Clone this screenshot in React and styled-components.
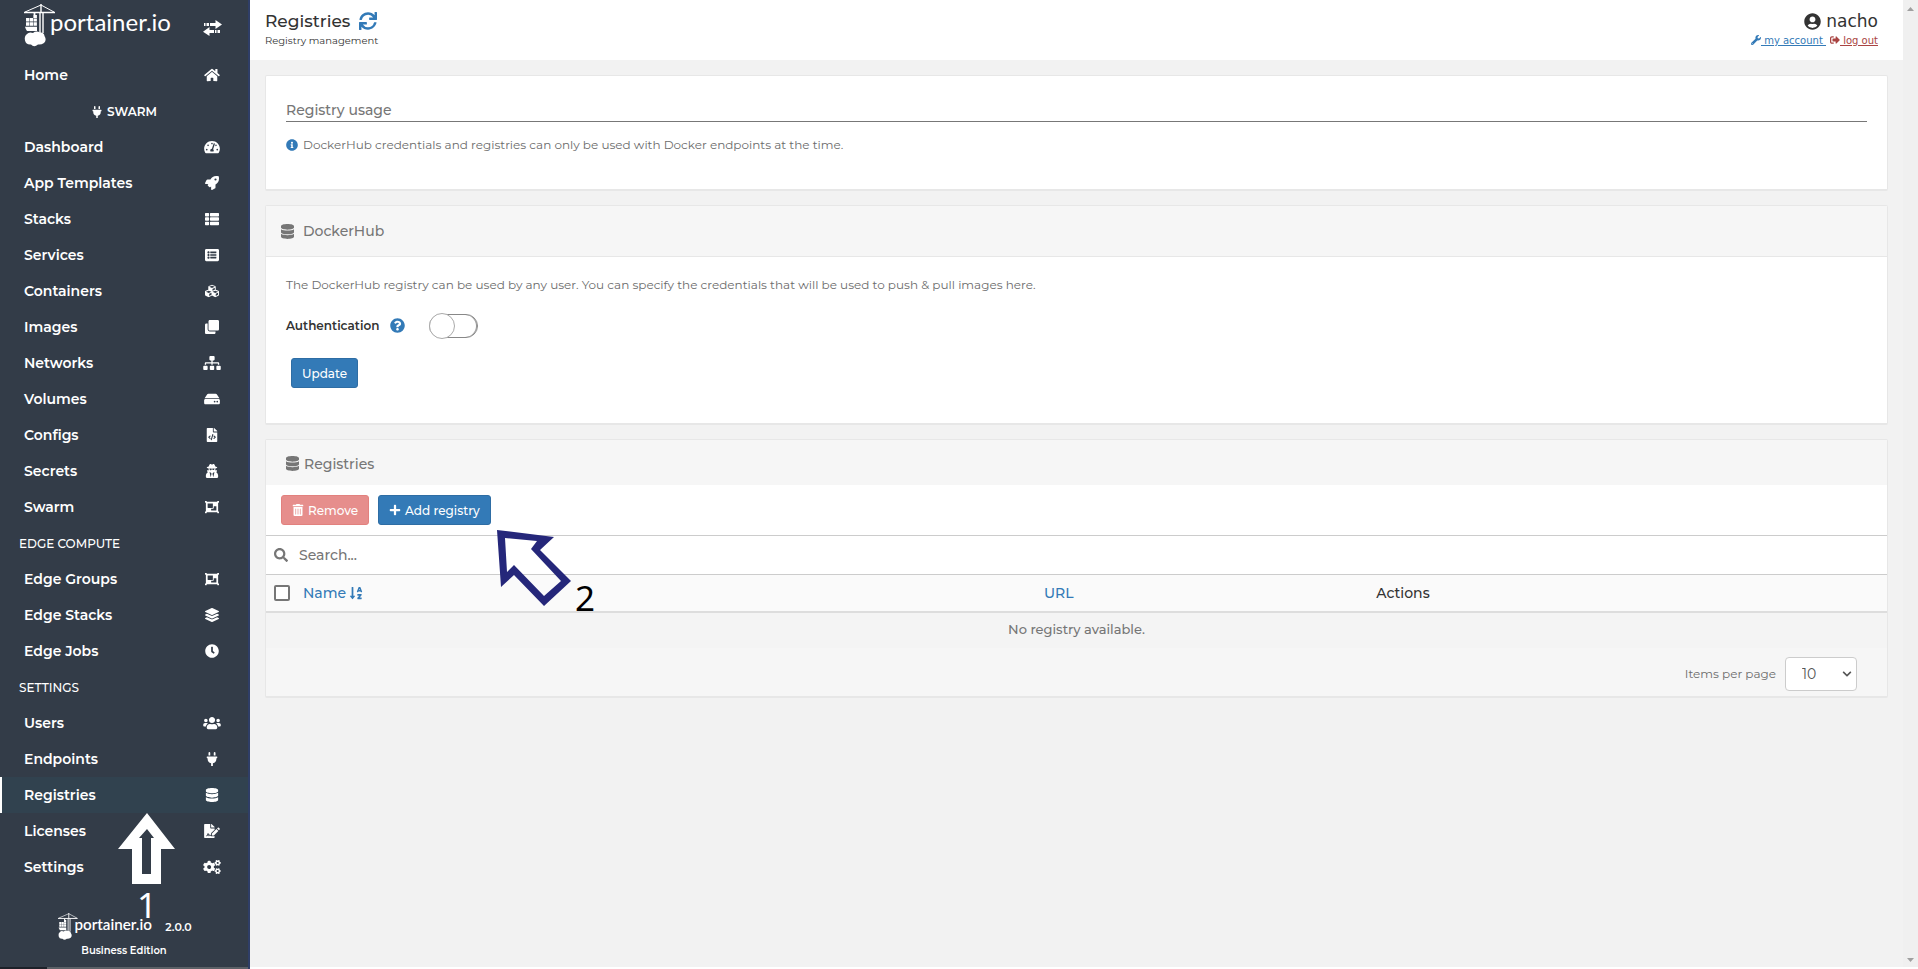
import React from "react";
import styled, { createGlobalStyle, css } from "styled-components";
import {
  FaHome, FaPlug, FaTachometerAlt, FaRocket, FaThList, FaListAlt, FaCubes, FaClone,
  FaSitemap, FaHdd, FaFileCode, FaUserSecret, FaObjectGroup, FaLayerGroup, FaClock,
  FaUsers, FaDatabase, FaFileSignature, FaCogs, FaSync, FaUserCircle, FaWrench,
  FaSignOutAlt, FaInfoCircle, FaQuestionCircle, FaTrashAlt, FaPlus, FaSearch,
  FaSortAlphaDown, FaChevronDown,
} from "react-icons/fa";

const GlobalStyle = createGlobalStyle`
  *, *::before, *::after { box-sizing: border-box; }
  body {
    margin: 0;
    background: #f2f2f2;
    color: #333;
    font-family: Montserrat, Inter, "Liberation Sans", sans-serif;
    font-size: 12px;
    line-height: 20px;
  }
  button, input, select { font-family: inherit; }
`;

const Shell = styled.div`
  display: grid;
  grid-template-columns: 250px minmax(0, 1fr) 15px;
  min-height: 100vh;
`;

/* ---------- sidebar ---------- */

const Sidebar = styled.nav`
  display: flex;
  flex-direction: column;
  background: #333c48;
  border-right: 2px solid #2f3e67;
  color: #fff;
`;

const SidebarTop = styled.div`
  display: flex;
  align-items: flex-start;
  justify-content: space-between;
  height: 57px;
  padding: 4px 26px 0 24px;
`;

const CollapseButton = styled.button`
  display: flex;
  margin-top: 16px;
  padding: 0;
  border: 0;
  background: none;
  color: #fff;
  cursor: pointer;
`;

const Menu = styled.ul`
  margin: 0;
  padding: 0;
  list-style: none;
`;

const MenuRow = styled.li`
  position: relative;
`;

const MenuLink = styled.a`
  display: flex;
  align-items: center;
  justify-content: space-between;
  height: 36px;
  padding: 0 27px 0 24px;
  color: #fff;
  font-size: 14px;
  font-weight: 600;
  text-decoration: none;
  ${(p) => p.$active && css`
    background: #31424f;
    box-shadow: inset 2px 0 0 #fff;
  `}
`;

const MenuIcon = styled.span`
  display: flex;
  svg { width: 18px; height: 14px; }
`;

const MenuHeading = styled.li`
  display: flex;
  align-items: center;
  gap: 4px;
  height: 36px;
  padding: 2px 19px 0;
  font-size: 12px;
  font-weight: ${(p) => (p.$center ? 600 : 500)};
  justify-content: ${(p) => (p.$center ? "center" : "flex-start")};
`;

const SidebarFooter = styled.footer`
  display: flex;
  flex-direction: column;
  align-items: center;
  margin-top: auto;
  font-size: 10px;
  font-weight: 600;
`;

const Version = styled.div`
  display: flex;
  align-items: center;
  gap: 12px;
  padding-left: 2px;
  font-size: 11px;
`;

const StatusStrip = styled.div`
  width: 100%;
  height: 2px;
  margin-top: 6px;
  background: linear-gradient(to right, #1d2129 47px, #5c6167 47px);
`;

/* ---------- main ---------- */

const Main = styled.main`
  min-width: 0;
  border-bottom: 2px solid #fff;
`;

const PageHeader = styled.header`
  display: flex;
  justify-content: space-between;
  height: 60px;
  padding: 10px 25px 0 15px;
  background: #fff;
`;

const Title = styled.h1`
  display: flex;
  align-items: center;
  gap: 9px;
  margin: 0;
  font-size: 17px;
  font-weight: 500;
  line-height: 22px;
`;

const IconButton = styled.button`
  display: flex;
  padding: 0;
  border: 0;
  background: none;
  color: #337ab7;
  font-size: 18px;
  cursor: pointer;
`;

const Subtitle = styled.div`
  font-size: 10px;
  line-height: 18px;
`;

const UserBox = styled.div`
  display: flex;
  flex-direction: column;
  align-items: flex-end;
  font-family: "DejaVu Sans", sans-serif;
`;

const UserName = styled.div`
  display: flex;
  align-items: center;
  gap: 5px;
  font-size: 17px;
  line-height: 22px;
`;

const UserLinks = styled.div`
  display: flex;
  gap: 4px;
  font-size: 10px;
  line-height: 18px;
`;

const UserLink = styled.a`
  color: ${(p) => (p.$danger ? "#a94442" : "#337ab7")};
  white-space: pre;
  svg { vertical-align: -1px; }
`;

const Content = styled.div`
  display: flex;
  flex-direction: column;
  gap: 14px;
  padding: 15px;
`;

const Card = styled.section`
  border: 1px solid #e7e7e7;
  border-bottom-width: 2px;
  border-radius: 2px;
  background: ${(p) => (p.$muted ? "#f6f6f6" : "#fff")};
`;

const CardHeader = styled.h2`
  display: flex;
  align-items: center;
  gap: ${(p) => (p.$table ? 5 : 9)}px;
  height: ${(p) => (p.$table ? 45 : 51)}px;
  margin: 0;
  padding: ${(p) => (p.$table ? "2px 20px 0" : "0 15px")};
  border-bottom: ${(p) => (p.$table ? 0 : "1px solid #e7e7e7")};
  background: #f6f6f6;
  color: #767676;
  font-size: 14px;
  font-weight: 500;
  svg { width: 13px; height: 15px; }
`;

const CardBody = styled.div`
  padding: ${(p) => (p.$short ? "20px 20px 34px" : "18px 20px 35px")};
  color: #6c6c6c;
`;

const FormTitle = styled.h3`
  margin: 0 0 13px;
  padding-top: 4px;
  border-bottom: 1px solid #777;
  color: #767676;
  font-size: 14px;
  font-weight: 500;
  line-height: 21px;
`;

const Note = styled.p`
  display: flex;
  align-items: center;
  gap: 5px;
  margin: 0;
  svg { color: #337ab7; }
`;

const AuthRow = styled.label`
  display: flex;
  align-items: center;
  height: 26px;
  margin: 18px 0 19px;
  color: #333;
  font-weight: 600;
  cursor: pointer;
`;

const HelpIcon = styled(FaQuestionCircle)`
  margin: 0 24px 2px 11px;
  color: #337ab7;
  font-size: 15px;
`;

const Switch = styled.input`
  appearance: none;
  display: flex;
  align-items: center;
  width: 49px;
  height: 24px;
  margin: 0;
  border: 1px solid #888;
  border-radius: 12px;
  background: #fff;
  box-shadow: inset -1px 0 0 #999;
  cursor: pointer;
  &::before {
    content: "";
    width: 26px;
    height: 26px;
    margin-left: -1px;
    flex: none;
    border: 1px solid #aaa;
    border-radius: 50%;
    background: #fff;
  }
  &:checked { justify-content: flex-end; background: #337ab7; }
`;

const Button = styled.button`
  display: inline-flex;
  align-items: center;
  justify-content: center;
  gap: 4px;
  height: 30px;
  padding: 0 10px;
  border: 1px solid ${(p) => (p.$danger ? "#d43f3a" : "#2e6da4")};
  border-radius: 3px;
  background: ${(p) => (p.$danger ? "#d9534f" : "#337ab7")};
  color: #fff;
  font-size: 12px;
  font-weight: 500;
  cursor: pointer;
  &:disabled { opacity: 0.65; cursor: not-allowed; }
`;

const FormActions = styled.div`
  padding: 0 5px;
`;

const ActionBar = styled.div`
  position: relative;
  display: flex;
  gap: 9px;
  padding: 10px 15px;
  background: #fff;
`;

const SearchBar = styled.label`
  display: flex;
  align-items: center;
  gap: 11px;
  height: 39px;
  padding: 0 8px;
  border-top: 1px solid #ccc;
  background: #fff;
  color: #767676;
  font-size: 14px;
`;

const SearchInput = styled.input`
  flex: 1;
  padding: 0;
  border: 0;
  outline: 0;
  background: none;
  color: #767676;
  font-size: 14px;
  font-weight: 500;
  &::placeholder { color: #767676; opacity: 1; }
`;

const Table = styled.table`
  width: 100%;
  border-collapse: separate;
  border-spacing: 0;
  table-layout: fixed;
`;

const HeadCell = styled.th`
  width: ${(p) => p.$width};
  height: 39px;
  padding: 0 8px 1px;
  border-top: 1px solid #ccc;
  border-bottom: 2px solid #ddd;
  background: #fafafa;
  color: #333;
  font-size: 14px;
  font-weight: 500;
  text-align: left;
  > div { display: flex; align-items: center; gap: 13px; }
`;

const SortLink = styled.a`
  display: inline-flex;
  align-items: center;
  gap: 3px;
  color: #337ab7;
  text-decoration: none;
`;

const Checkbox = styled.input`
  appearance: none;
  width: 16px;
  height: 16px;
  margin: 0;
  border: 2px solid #767676;
  border-radius: 2px;
  background: #fff;
  &:checked { background: #337ab7; }
`;

const EmptyCell = styled.td`
  height: 35px;
  padding: 0 8px 4px;
  background: #f4f4f4;
  color: #767676;
  font-size: 13px;
  font-weight: 500;
  text-align: center;
`;

const TableFooter = styled.div`
  display: flex;
  align-items: center;
  justify-content: flex-end;
  height: 48px;
  padding: 4px 30px 0 0;
`;

const PageSizeLabel = styled.label`
  display: flex;
  align-items: center;
  gap: 9px;
  color: #6c6c6c;
`;

const SelectWrap = styled.span`
  display: grid;
  align-items: center;
  width: 72px;
  height: 34px;
  color: #555;
  > * { grid-area: 1 / 1; }
  > svg { justify-self: end; margin-right: 5px; font-size: 10px; pointer-events: none; }
`;

const Select = styled.select`
  appearance: none;
  width: 100%;
  height: 100%;
  padding: 0 16px;
  border: 1px solid #ccc;
  border-radius: 4px;
  background: #fff;
  color: #555;
  font-size: 14px;
`;

const ScrollTrack = styled.div`
  position: sticky;
  top: 0;
  display: flex;
  flex-direction: column;
  align-items: center;
  justify-content: space-between;
  height: 100vh;
  padding: 7px 0 5px;
  border-bottom: 2px solid #fff;
  background: #f0f0f0;
`;

/* ---------- annotations ---------- */

const StepOne = styled.div`
  position: absolute;
  top: 36px;
  left: 118px;
  z-index: 2;
  display: flex;
  flex-direction: column;
  align-items: center;
  gap: 13px;
  color: #fff;
  pointer-events: none;
`;

const StepTwo = styled.div`
  position: absolute;
  top: 45px;
  left: 231px;
  z-index: 2;
  display: flex;
  align-items: flex-end;
  gap: 4px;
  color: #000;
  pointer-events: none;
`;

const StepNumber = styled.span`
  font-family: "Noto Sans", sans-serif;
  font-size: 35px;
  font-weight: 400;
  line-height: 16px;
`;

/* ---------- drawings ---------- */

function Logo({ width, height }) {
  return (
    <svg width={width} height={height} viewBox="0 0 150 44" fill="#fff" role="img" aria-label="portainer.io">
      <g stroke="#fff" fill="none" strokeWidth="1">
        <path d="M0 8.5H31" strokeWidth="1.5" />
        <path d="M1 8L17 1L30 8" />
        <path d="M17 0V9" strokeWidth="1.4" />
        <path d="M16 9V29M19 9V29" strokeWidth="1.4" />
        <path d="M10.500 9V14" strokeWidth="1.8" />
      </g>
      <path d="M2 14h3.300v3.600H2zM5.800 14h3.300v3.600H5.800zM9.600 11h3.300v3H9.600zM9.600 14.500h3.300v3.100H9.600zM2 18.200h3.300v3.600H2zM5.800 18.200h3.300v3.600H5.800zM9.600 18.200h3.300v3.600H9.600z" />
      <path d="M1 22.800H13V27H3Q1.500 25 1 22.800Z" />
      <path d="M3 30Q5 27.500 9 29Q12 26.500 16 28.500Q20 28 20.500 32Q23 36 20 39Q17 41 14 40.500Q10 44 7 40.500Q2 41 1 36.500Q0 32 3 30Z" />
      <text x="26" y="27" fontFamily="Lato, sans-serif" fontSize="24">portainer.io</text>
    </svg>
  );
}

function TransferIcon() {
  return (
    <svg width="19" height="16" viewBox="0 0 19 16" fill="currentColor">
      <path d="M12.500 0L19 4.500L12.500 9V6H7V3H12.500ZM1 3H2.500V6H1ZM3.500 3H6V6H3.500ZM6.500 7L0 11.700L6.500 16V13H11V10H6.500ZM12 10H13.500V13H12ZM14.500 10H17V13H14.500Z" />
    </svg>
  );
}

const ScrollArrow = ({ down }) => (
  <svg width="7" height="4" viewBox="0 0 7 4" fill="#a0a0a0">
    <path d={down ? "M0 0H7L3.500 4Z" : "M0 4H7L3.500 0Z"} />
  </svg>
);

/* ---------- page ---------- */

const endpointMenu = [
  ["Dashboard", FaTachometerAlt], ["App Templates", FaRocket], ["Stacks", FaThList],
  ["Services", FaListAlt], ["Containers", FaCubes], ["Images", FaClone],
  ["Networks", FaSitemap], ["Volumes", FaHdd], ["Configs", FaFileCode],
  ["Secrets", FaUserSecret], ["Swarm", FaObjectGroup],
];
const edgeMenu = [["Edge Groups", FaObjectGroup], ["Edge Stacks", FaLayerGroup], ["Edge Jobs", FaClock]];
const settingsMenu = [
  ["Users", FaUsers], ["Endpoints", FaPlug], ["Registries", FaDatabase],
  ["Licenses", FaFileSignature], ["Settings", FaCogs],
];

function MenuItem({ label, icon: Icon, active, children }) {
  return (
    <MenuRow>
      <MenuLink href="#" $active={active} aria-current={active ? "page" : undefined}>
        {label}
        <MenuIcon><Icon /></MenuIcon>
      </MenuLink>
      {children}
    </MenuRow>
  );
}

export default function App() {
  return (
    <Shell>
      <GlobalStyle />
      <Sidebar>
        <SidebarTop>
          <Logo width={150} height={44} />
          <CollapseButton type="button" aria-label="Toggle sidebar"><TransferIcon /></CollapseButton>
        </SidebarTop>
        <Menu>
          <MenuItem label="Home" icon={FaHome} />
          <MenuHeading $center><FaPlug /> SWARM</MenuHeading>
          {endpointMenu.map(([label, icon]) => <MenuItem key={label} label={label} icon={icon} />)}
          <MenuHeading>EDGE COMPUTE</MenuHeading>
          {edgeMenu.map(([label, icon]) => <MenuItem key={label} label={label} icon={icon} />)}
          <MenuHeading>SETTINGS</MenuHeading>
          {settingsMenu.map(([label, icon]) => (
            <MenuItem key={label} label={label} icon={icon} active={label === "Registries"}>
              {label === "Registries" && (
                <StepOne>
                  <svg width="58" height="71" viewBox="0 0 58 71" fill="currentColor" fillRule="evenodd">
                    <path d="M29 0L57 36H43V71H14V36H0ZM29 16L21 25H24V61H33V25H36Z" />
                  </svg>
                  <StepNumber>1</StepNumber>
                </StepOne>
              )}
            </MenuItem>
          ))}
        </Menu>
        <SidebarFooter>
          <Version><Logo width={95} height={28} /> 2.0.0</Version>
          <div>Business Edition</div>
          <StatusStrip />
        </SidebarFooter>
      </Sidebar>

      <Main>
        <PageHeader>
          <div>
            <Title>
              Registries
              <IconButton type="button" aria-label="Refresh"><FaSync /></IconButton>
            </Title>
            <Subtitle>Registry management</Subtitle>
          </div>
          <UserBox>
            <UserName><FaUserCircle /> nacho</UserName>
            <UserLinks>
              <UserLink href="#"><FaWrench /> my account </UserLink>
              <UserLink href="#" $danger><FaSignOutAlt /> log out</UserLink>
            </UserLinks>
          </UserBox>
        </PageHeader>

        <Content>
          <Card>
            <CardBody $short>
              <FormTitle>Registry usage</FormTitle>
              <Note>
                <FaInfoCircle />
                DockerHub credentials and registries can only be used with Docker endpoints at the time.
              </Note>
            </CardBody>
          </Card>

          <Card>
            <CardHeader><FaDatabase /> DockerHub</CardHeader>
            <CardBody>
              <Note>
                The DockerHub registry can be used by any user. You can specify the credentials that will be used to push &amp; pull images here.
              </Note>
              <AuthRow>
                Authentication
                <HelpIcon />
                <Switch type="checkbox" role="switch" />
              </AuthRow>
              <FormActions><Button type="button">Update</Button></FormActions>
            </CardBody>
          </Card>

          <Card $muted>
            <CardHeader $table><FaDatabase /> Registries</CardHeader>
            <ActionBar>
              <Button type="button" $danger disabled><FaTrashAlt /> Remove</Button>
              <Button type="button"><FaPlus /> Add registry</Button>
              <StepTwo>
                <svg width="74" height="76" viewBox="0 0 74 76" fill="#25277a" fillRule="evenodd">
                  <path d="M0 0L57 7L43 20L74 51L47 76L17 45L4 57ZM8 8L10 42L17 35L47 66L64 51L34 19L40 11Z" />
                </svg>
                <StepNumber>2</StepNumber>
              </StepTwo>
            </ActionBar>
            <SearchBar>
              <FaSearch />
              <SearchInput type="text" placeholder="Search..." aria-label="Search" />
            </SearchBar>
            <Table>
              <thead>
                <tr>
                  <HeadCell $width="47.5%">
                    <div>
                      <Checkbox type="checkbox" aria-label="Select all" />
                      <SortLink href="#">Name <FaSortAlphaDown /></SortLink>
                    </div>
                  </HeadCell>
                  <HeadCell $width="20.5%"><SortLink href="#">URL</SortLink></HeadCell>
                  <HeadCell $width="32%">Actions</HeadCell>
                </tr>
              </thead>
              <tbody>
                <tr><EmptyCell colSpan={3}>No registry available.</EmptyCell></tr>
              </tbody>
            </Table>
            <TableFooter>
              <PageSizeLabel>
                Items per page
                <SelectWrap>
                  <Select defaultValue="10">
                    <option>10</option>
                    <option>25</option>
                    <option>50</option>
                    <option>100</option>
                  </Select>
                  <FaChevronDown />
                </SelectWrap>
              </PageSizeLabel>
            </TableFooter>
          </Card>
        </Content>
      </Main>

      <ScrollTrack aria-hidden="true">
        <ScrollArrow />
        <ScrollArrow down />
      </ScrollTrack>
    </Shell>
  );
}
